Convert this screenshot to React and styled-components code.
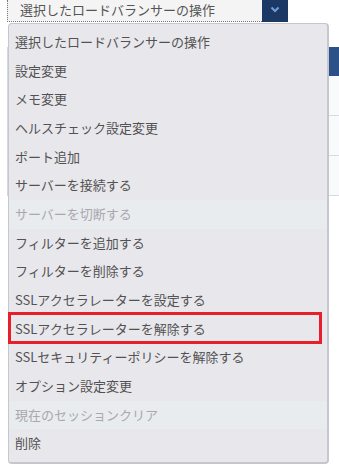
import styled, { createGlobalStyle } from 'styled-components'

const GlobalStyle = createGlobalStyle`
    body {
        margin: 0;
        background: #fff;
        font-family: "Noto Sans CJK JP", "Noto Sans", sans-serif;
        overflow: hidden;
    }
`

const items = [
    { label: '選択したロードバランサーの操作' },
    { label: '設定変更' },
    { label: 'メモ変更' },
    { label: 'ヘルスチェック設定変更' },
    { label: 'ポート追加' },
    { label: 'サーバーを接続する' },
    { label: 'サーバーを切断する', disabled: true },
    { label: 'フィルターを追加する' },
    { label: 'フィルターを削除する' },
    { label: 'SSLアクセラレーターを設定する' },
    { label: 'SSLアクセラレーターを解除する', marked: true },
    { label: 'SSLセキュリティーポリシーを解除する' },
    { label: 'オプション設定変更' },
    { label: '現在のセッションクリア', disabled: true },
    { label: '削除' },
]

const App = () => {
    return (
        <Page>
            <GlobalStyle />
            <SelectRow>
                <Select>選択したロードバランサーの操作</Select>
                <SelectButton>
                    <svg width="10" height="7" viewBox="0 0 10 7">
                        <path d="M1.5 1.5 L5 5 L8.5 1.5" fill="none" stroke="#6c9fd9" strokeWidth="2" />
                    </svg>
                </SelectButton>
            </SelectRow>
            <Table>
                <HeaderRow />
                <Row />
                <Row />
                <Row />
            </Table>
            <Menu>
                {items.map((item) => (
                    <Item key={item.label} disabled={item.disabled} marked={item.marked}>
                        {item.label}
                    </Item>
                ))}
            </Menu>
        </Page>
    )
}

const Page = styled.div`
    position: relative;
    width: 339px;
    height: 470px;
`

const SelectRow = styled.div`
    display: flex;
    margin-left: 7px;
    height: 22px;
`

const Select = styled.div`
    width: 255px;
    height: 22px;
    box-sizing: border-box;
    background: #f4f4f4;
    border-left: 1px dotted #777;
    border-bottom: 1px dotted #777;
    padding-left: 12px;
    font-size: 13px;
    line-height: 20px;
    color: #555;
`

const SelectButton = styled.div`
    width: 26px;
    height: 22px;
    background: #1c3966;
    display: flex;
    align-items: center;
    justify-content: center;
    padding-bottom: 3px;
    box-sizing: border-box;
`

const Table = styled.div`
    margin: 25px 0 0 7px;
    border-left: 1px solid #d5d7dd;
`

const HeaderRow = styled.div`
    height: 29px;
    background: #2c5088;
`

const Row = styled.div`
    height: 39px;
    background: #f9fafc;
    border-bottom: 1px solid #d8dae0;
`

const Menu = styled.div`
    position: absolute;
    top: 23px;
    left: 8px;
    width: 321px;
    box-sizing: border-box;
    padding: 4px 0;
    background: #e8e7ec;
    border: 1px solid #c6c6ce;
    border-right-width: 2px;
    border-bottom-width: 2px;
    border-radius: 4px;
`

const Item = styled.div`
    position: relative;
    height: 28.67px;
    line-height: 28px;
    padding-left: 6px;
    font-size: 13px;
    white-space: nowrap;
    color: ${(props) => (props.disabled ? '#a8a8ae' : '#525252')};
    background: ${(props) => (props.disabled ? '#e8ecef' : 'transparent')};
    &::after {
        content: '';
        display: ${(props) => (props.marked ? 'block' : 'none')};
        position: absolute;
        top: -3px;
        bottom: -1px;
        left: -1px;
        right: 5px;
        border: 3px solid #e81f2a;
    }
`

export default App
